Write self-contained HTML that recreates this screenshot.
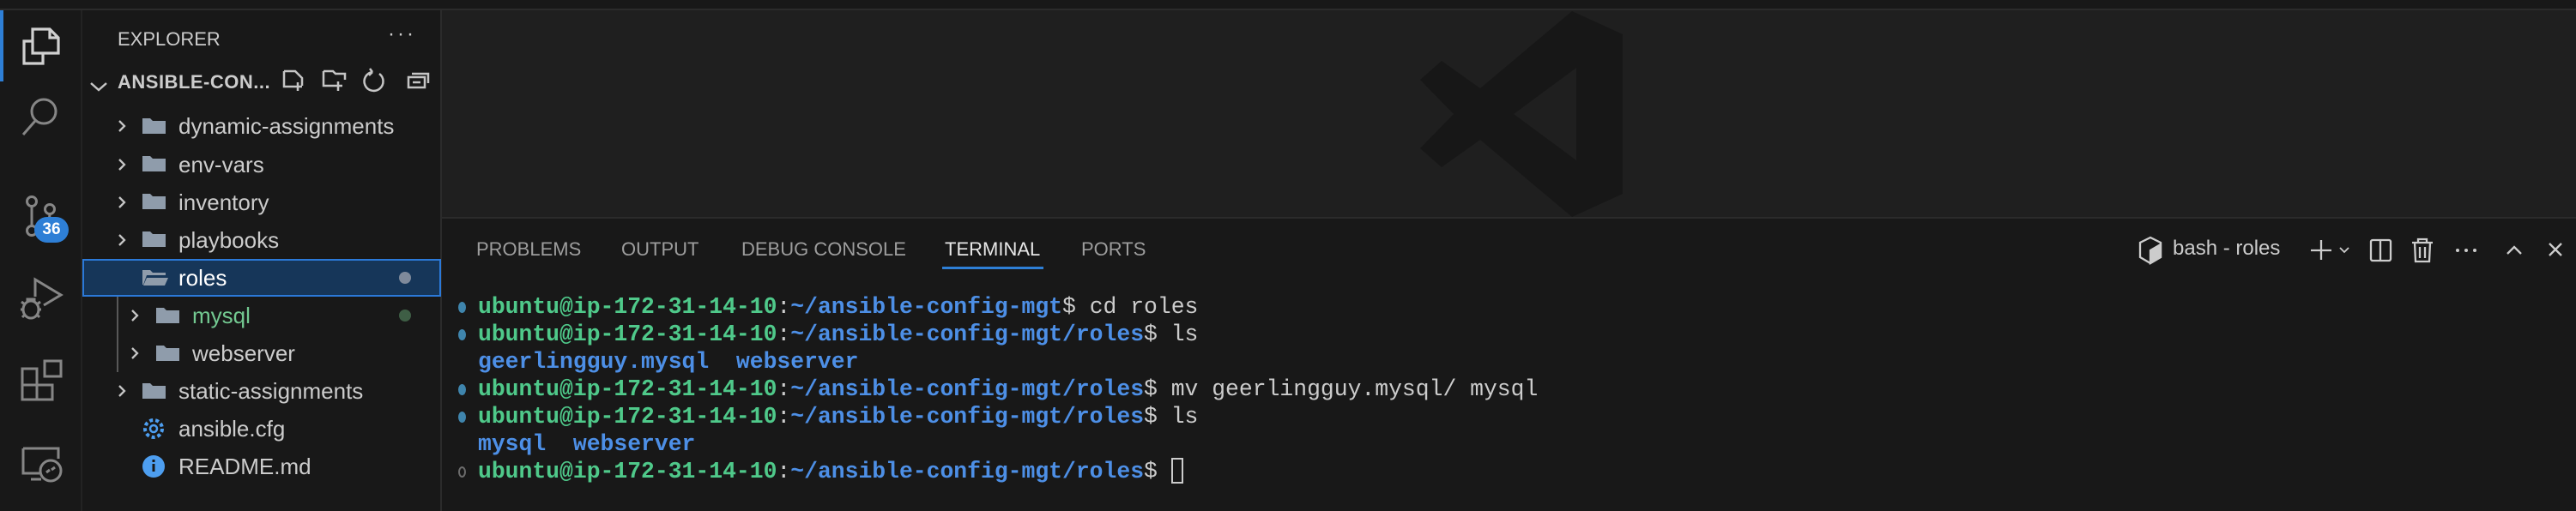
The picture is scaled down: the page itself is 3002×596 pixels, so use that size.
<!DOCTYPE html>
<html><head><meta charset="utf-8"><style>
*{margin:0;padding:0;box-sizing:border-box}
body{width:3002px;height:596px;background:#181818;position:relative;overflow:hidden;font-family:"Liberation Sans",sans-serif;color:#cccccc}
.abs{position:absolute}
.row{position:absolute;left:96px;width:418px;height:44px;font-size:26px;line-height:44px;white-space:nowrap}
.t{position:absolute;font-size:22px;color:#9d9d9d;top:278px}
.term{position:absolute;left:557px;font-family:"Liberation Mono",monospace;font-size:26.4px;white-space:pre;line-height:32px}
.g{color:#4fc98a;font-weight:bold}.b{color:#4d8fe6;font-weight:bold}.w{color:#cccccc}
.dot{position:absolute;left:534px;width:9px;height:13px;border-radius:50%;background:#3f85ad}
</style></head><body>
<div class="abs" style="left:0;top:0;width:3002px;height:10px;background:#181818"></div>
<div class="abs" style="left:0;top:10px;width:3002px;height:2px;background:#2b2b2b"></div>
<div class="abs" style="left:515px;top:12px;width:2487px;height:241px;background:#1f1f1f"></div>
<svg class="abs" style="left:0;top:0" width="3002" height="596">
<path fill-rule="evenodd" fill="#171717" d="M1832,13 L1891,40 L1891,226 L1832,253 L1725,163 L1680,195 L1655,173 L1694,133 L1655,93 L1680,71 L1725,103 Z M1837,79 L1764,133 L1837,187 Z"/>
</svg>
<div class="abs" style="left:515px;top:253px;width:2487px;height:2px;background:#2b2b2b"></div>
<div class="abs" style="left:513px;top:12px;width:2px;height:584px;background:#2b2b2b"></div>
<div class="abs" style="left:94px;top:12px;width:2px;height:584px;background:#232323"></div>
<div class="abs" style="left:0;top:12px;width:4px;height:83px;background:#2e7fd6"></div>
<svg class="abs" style="left:0;top:0" width="96" height="596" fill="none" stroke="#868686" stroke-width="3">
<path d="M38,34 H58 L68,44 V62 H38 Z M58,34 V44 H68" stroke="#d0d0d0" stroke-width="3.2"/>
<path d="M38,48 H28 V74 H50 V62" stroke="#d0d0d0" stroke-width="3.2"/>
<circle cx="51" cy="130" r="14"/><path d="M41,141 L27,157"/>
<circle cx="37" cy="235" r="5.5"/><circle cx="58" cy="244" r="5.5"/><circle cx="37" cy="269" r="5.5"/>
<path d="M37,241 V263 M58,250 C58,262 45,262 40,265"/>
<path d="M41,346 V326 L71,344 L51,356"/>
<ellipse cx="36" cy="361" rx="9" ry="10"/><path d="M25,352 L29,355 M47,352 L43,355 M24,361 H28 M44,361 H48 M26,370 L29,367 M46,370 L43,367 M32,353 V349 H40 V353"/>
<path d="M26,430 H43 V466 H26 Z M26,449 H61 V466 H43 M52,421 H71 V439 H52 Z"/>
<path d="M27,523 H68 V535 M27,523 V552 H46 M36,559 H48"/>
<circle cx="59" cy="549" r="12" /><path d="M54,551 l4,-3 M64,545 l-4,3"/>
</svg>
<div class="abs" style="left:40px;top:253px;width:40px;height:30px;border-radius:15px;background:#2e7fd6;color:#fff;font-weight:bold;font-size:19px;line-height:30px;text-align:center">36</div>
<div class="abs" style="left:137px;top:33px;font-size:22px;color:#cccccc">EXPLORER</div>
<div class="abs" style="left:452px;top:26px;font-size:24px;letter-spacing:3px;color:#ccc">···</div>
<svg class="abs" style="left:96px;top:0" width="418" height="596" fill="none" stroke="#c5c5c5" stroke-width="2.5">
<path d="M10,97 L19,105 L28,97"/>
<path d="M235,83 H248 L256,91 V100 M235,83 V101 H246 M251,96 V106 M246,101 H256"/>
<path d="M281,83 H292 L295,86 H306 V93 M281,83 V100 H294 M298,95 V106 M293,100 H303"/>
<path d="M346,86 A11,11 0 1 1 338,84 M338,84 L335,80 M338,84 L334,88"/>
<path d="M384,86 H403 V97 M380,90 H399 V102 H380 Z M385,96 H394"/>
<g stroke="#c5c5c5" stroke-width="2.3">
<path d="M43,141 L49,147 L43,153"/><path d="M43,186 L49,192 L43,198"/><path d="M43,230 L49,236 L43,242"/><path d="M43,274 L49,280 L43,286"/>
<path d="M37,321 L43,327 L49,321"/>
<path d="M58,362 L64,368 L58,374"/><path d="M58,406 L64,412 L58,418"/>
<path d="M43,450 L49,456 L43,462"/>
</g>
</svg>
<div class="abs" style="left:137px;top:83px;font-size:22px;font-weight:bold;color:#cccccc;letter-spacing:0.5px">ANSIBLE-CON...</div>
<div class="abs" style="left:96px;top:302px;width:418px;height:44px;background:#163659;border:2px solid #2b79d8"></div>
<svg class="abs" style="left:96px;top:0" width="418" height="596">
<g fill="#8f9cab">
<path d="M70,138 h9 l3,3 h15 v15 h-27 z"/><path d="M70,182 h9 l3,3 h15 v15 h-27 z"/><path d="M70,226 h9 l3,3 h15 v15 h-27 z"/><path d="M70,270 h9 l3,3 h15 v15 h-27 z"/>
<path d="M70,315 h9 l3,3 h15 v3 h-22 l-4,11 h-1 z M75,324 h25 l-4,9 h-25 z"/>
<path d="M86,359 h9 l3,3 h15 v15 h-27 z"/><path d="M86,403 h9 l3,3 h15 v15 h-27 z"/>
<path d="M70,447 h9 l3,3 h15 v15 h-27 z"/>
</g>
<circle cx="83" cy="500" r="10" fill="none" stroke="#4d9ef0" stroke-width="4" stroke-dasharray="4 3"/>
<circle cx="83" cy="500" r="4" fill="none" stroke="#4d9ef0" stroke-width="2.5"/>
<circle cx="83" cy="544" r="13" fill="#4d9ef0"/>
<rect x="81.5" y="541" width="3" height="9" fill="#181818"/><rect x="81.5" y="536" width="3" height="3" fill="#181818"/>
<rect x="40" y="346" width="2" height="88" fill="#585858"/>
<circle cx="376" cy="324" r="7" fill="#7f8a9b"/>
<circle cx="376" cy="368" r="7" fill="#3e5e45"/>
</svg>
<div class="row" style="top:125px"><span class="abs" style="left:112px">dynamic-assignments</span></div>
<div class="row" style="top:170px"><span class="abs" style="left:112px">env-vars</span></div>
<div class="row" style="top:214px"><span class="abs" style="left:112px">inventory</span></div>
<div class="row" style="top:258px"><span class="abs" style="left:112px">playbooks</span></div>
<div class="row" style="top:302px;color:#fff"><span class="abs" style="left:112px">roles</span></div>
<div class="row" style="top:346px;color:#73c991"><span class="abs" style="left:128px">mysql</span></div>
<div class="row" style="top:390px"><span class="abs" style="left:128px">webserver</span></div>
<div class="row" style="top:434px"><span class="abs" style="left:112px">static-assignments</span></div>
<div class="row" style="top:478px"><span class="abs" style="left:112px">ansible.cfg</span></div>
<div class="row" style="top:522px"><span class="abs" style="left:112px">README.md</span></div>
<div class="t" style="left:555px">PROBLEMS</div>
<div class="t" style="left:724px">OUTPUT</div>
<div class="t" style="left:864px">DEBUG CONSOLE</div>
<div class="t" style="left:1101px;color:#e7e7e7">TERMINAL</div>
<div class="t" style="left:1260px">PORTS</div>
<div class="abs" style="left:1098px;top:311px;width:118px;height:3px;background:#2e7fd6"></div>
<svg class="abs" style="left:2480px;top:270px" width="522" height="44" fill="none" stroke="#cccccc" stroke-width="2.3">
<path d="M26,7 L38,13 V30 L26,37 L14,30 V13 Z"/><path d="M26,22 L38,15 V30 L26,37 Z" fill="#cccccc"/>
<path d="M225,10 V33 M213,22 H237"/>
<path d="M247,19 L252,24 L257,19" stroke-width="1.8"/>
<rect x="283" y="10" width="23" height="24" rx="2"/><path d="M294,10 V34"/>
<path d="M331,13 H355 M338,13 V9 H348 V13 M334,13 L335,35 H351 L352,13 M340,18 V31 M346,18 V31"/>
<circle cx="384" cy="22" r="2" fill="#ccc" stroke="none"/><circle cx="394" cy="22" r="2" fill="#ccc" stroke="none"/><circle cx="404" cy="22" r="2" fill="#ccc" stroke="none"/>
<path d="M442,26 L450,18 L458,26"/>
<path d="M491,14 L505,28 M505,14 L491,28"/>
</svg>
<div class="abs" style="left:2532px;top:276px;font-size:24px;color:#cccccc">bash - roles</div>
<div class="dot" style="top:352px"></div><div class="dot" style="top:384px"></div><div class="dot" style="top:448px"></div><div class="dot" style="top:480px"></div>
<div class="dot" style="top:544px;background:none;border:2px solid #6b6b6b"></div>
<div class="term" style="top:342px"><span class="g">ubuntu@ip-172-31-14-10</span><span class="w">:</span><span class="b">~/ansible-config-mgt</span><span class="w">$ cd roles</span></div>
<div class="term" style="top:374px"><span class="g">ubuntu@ip-172-31-14-10</span><span class="w">:</span><span class="b">~/ansible-config-mgt/roles</span><span class="w">$ ls</span></div>
<div class="term" style="top:406px"><span class="b">geerlingguy.mysql  webserver</span></div>
<div class="term" style="top:438px"><span class="g">ubuntu@ip-172-31-14-10</span><span class="w">:</span><span class="b">~/ansible-config-mgt/roles</span><span class="w">$ mv geerlingguy.mysql/ mysql</span></div>
<div class="term" style="top:470px"><span class="g">ubuntu@ip-172-31-14-10</span><span class="w">:</span><span class="b">~/ansible-config-mgt/roles</span><span class="w">$ ls</span></div>
<div class="term" style="top:502px"><span class="b">mysql  webserver</span></div>
<div class="term" style="top:534px"><span class="g">ubuntu@ip-172-31-14-10</span><span class="w">:</span><span class="b">~/ansible-config-mgt/roles</span><span class="w">$ </span><span style="display:inline-block;width:14px;height:30px;border:2px solid #ccc;vertical-align:-7px"></span></div>
</body></html>
